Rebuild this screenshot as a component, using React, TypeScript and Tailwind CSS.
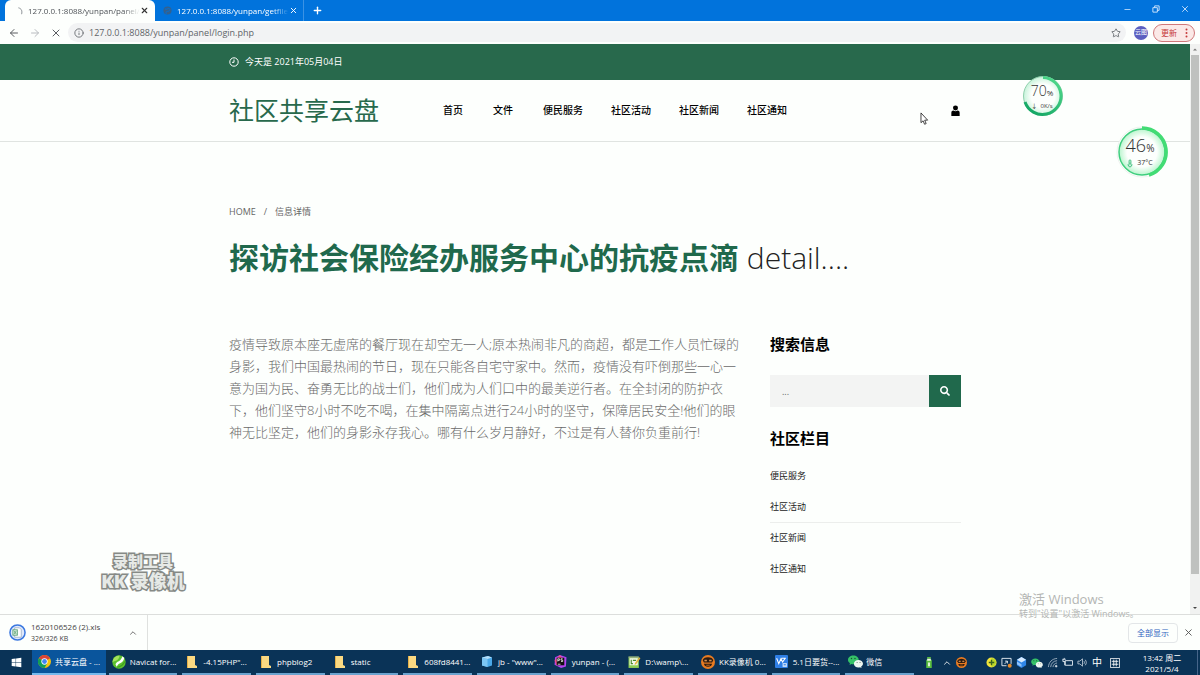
import type { ReactNode } from "react";
import { ArrowLeft, ArrowRight, ChevronUp, Info, Minus, Plus, Star, X } from "lucide-react";
import { FaSearch, FaWindows } from "react-icons/fa";

const navLinks = ["首页", "文件", "便民服务", "社区活动", "社区新闻", "社区通知"];
const categories = ["便民服务", "社区活动", "社区新闻", "社区通知"];

const article =
  "疫情导致原本座无虚席的餐厅现在却空无一人;原本热闹非凡的商超，都是工作人员忙碌的身影，我们中国最热闹的节日，现在只能各自宅守家中。然而，疫情没有吓倒那些一心一意为国为民、奋勇无比的战士们，他们成为人们口中的最美逆行者。在全封闭的防护衣下，他们坚守8小时不吃不喝，在集中隔离点进行24小时的坚守，保障居民安全!他们的眼神无比坚定，他们的身影永存我心。哪有什么岁月静好，不过是有人替你负重前行!";

function ChromeIcon() {
  return (
    <svg viewBox="0 0 24 24" className="h-[13px] w-[13px]">
      <circle cx="12" cy="12" r="12" fill="#f4c20d" />
      <path d="M12 12 1.6 6A12 12 0 0 1 22.4 6Z" fill="#db4437" />
      <path d="M12 12 1.6 6A12 12 0 0 0 12 24l5-9Z" fill="#0f9d58" />
      <circle cx="12" cy="12" r="5.8" fill="#fff" />
      <circle cx="12" cy="12" r="4.4" fill="#4285f4" />
    </svg>
  );
}

function NavicatIcon() {
  return (
    <svg viewBox="0 0 24 24" className="h-[14px] w-[14px]">
      <circle cx="12" cy="12" r="11.500" fill="#5cc02e" />
      <path d="M1 13C1 6 6 1 13 1c0 4-3 8-6 9s-5 1-6 3Z" fill="#a5e25c" />
      <path d="M6 16c2-5 5-4 8-7 2-2 3-5 4-7l3 3c-1 5-4 8-7 9s-4 3-6 6Z" fill="#fff" />
      <path d="M9 21c6-1 10-4 13-10" fill="none" stroke="#3f9f1e" strokeWidth="2" />
    </svg>
  );
}

function FolderIcon() {
  return (
    <svg viewBox="0 0 10 14" className="h-[14px] w-[10px]">
      <path d="M0 1h6v12H0z" fill="#e5b04a" />
      <path d="M1 1h7v9l2 1v2H1z" fill="#fbd982" />
    </svg>
  );
}

function CubeIcon() {
  return (
    <svg viewBox="0 0 24 24" className="h-[13px] w-[12px]">
      <path d="M2 4 14 1l8 3v16l-9 3-11-3Z" fill="#4aa8e8" />
      <path d="m2 4 11 3v16L2 20Z" fill="#7cc6f4" />
      <path d="m2 4 12-3 8 3-9 3Z" fill="#b4dffa" />
    </svg>
  );
}

function PhpStormIcon() {
  return (
    <svg viewBox="0 0 24 24" className="h-[13px] w-[13px]">
      <path d="M2 4 11 0l12 4-1 17-9 3L1 18Z" fill="#b345f1" />
      <path d="M1 10 11 0l4 5L5 20Z" fill="#f14f8c" />
      <rect x="5" y="5" width="14" height="14" fill="#111" />
      <path d="M7 12V7h3v3H7m9-3h-3v2.500h3V12h-3M7 17h5" fill="none" stroke="#fff" strokeWidth="1.400" />
    </svg>
  );
}

function NotepadIcon() {
  return (
    <svg viewBox="0 0 24 24" className="h-[14px] w-[13px]">
      <path d="M1 2h19v21H1z" fill="#8fce54" />
      <path d="M3 5h15v13H3z" fill="#f2f8ea" />
      <path d="M1 2h19v2H1z" fill="#9aa393" />
      <path d="M6 8v7h3M9 9h6" fill="none" stroke="#4a8a28" strokeWidth="2" />
      <path d="m13 14 8-11 2 2-8 11-3 1Z" fill="#e3b13b" />
    </svg>
  );
}

function KkIcon({ className }: { className: string }) {
  return (
    <svg viewBox="0 0 24 24" className={className}>
      <circle cx="12" cy="12" r="12" fill="#e77b22" />
      <path d="M3 9c1-3 4-5 9-5s8 2 9 5l-2 4H5Z" fill="#2b1a10" />
      <path d="M6 9h4M14 10h4M6 10h4M14 9h4" stroke="#f3a45c" strokeWidth="1.500" />
      <path d="M5 15h14c-1 4-3 5-7 5s-6-1-7-5Z" fill="#2b1a10" />
      <path d="M9 17.500h6" stroke="#e77b22" strokeWidth="1.400" />
    </svg>
  );
}

function WpsIcon() {
  return (
    <svg viewBox="0 0 24 24" className="h-[13px] w-[13px]">
      <rect width="24" height="24" rx="2" fill="#2f7fe6" />
      <path d="m3 6 4 10 4-9 3 6 5-7M12 6h8" fill="none" stroke="#fff" strokeWidth="2" />
      <path d="M14 15h8v7h-8z" fill="#cfe3fb" />
      <path d="M16 17h4v2h-4z" fill="#2f7fe6" />
    </svg>
  );
}

function WechatIcon({ className }: { className: string }) {
  return (
    <svg viewBox="0 0 28 24" className={className}>
      <path d="M10 1C4.500 1 0 4.600 0 9c0 2.500 1.400 4.600 3.600 6L3 18.500l3.500-2c1 .3 2.200.5 3.500.5 5.500 0 10-3.600 10-8S15.500 1 10 1Z" fill="#35c268" />
      <path d="M19.500 9C15 9 11 12 11 16s4 7 8.500 7c1 0 2-.1 2.900-.4l2.800 1.400-.6-2.700c2-1.200 3.400-3.200 3.400-5.300 0-4-4-7-8.500-7Z" fill="#eef7f0" />
      <circle cx="6.500" cy="6.500" r="1.300" fill="#17502f" />
      <circle cx="13" cy="6.500" r="1.300" fill="#17502f" />
      <circle cx="17" cy="14" r="1" fill="#5b6b60" />
      <circle cx="22.500" cy="14" r="1" fill="#5b6b60" />
    </svg>
  );
}

const tasks: { label: string; icon: ReactNode; active?: boolean }[] = [
  { label: "共享云盘 - ...", icon: <ChromeIcon />, active: true },
  { label: "Navicat for...", icon: <NavicatIcon /> },
  { label: "-4.15PHP\"...", icon: <FolderIcon /> },
  { label: "phpblog2", icon: <FolderIcon /> },
  { label: "static", icon: <FolderIcon /> },
  { label: "608fd8441...", icon: <FolderIcon /> },
  { label: "jb - \"www\"...", icon: <CubeIcon /> },
  { label: "yunpan - (...", icon: <PhpStormIcon /> },
  { label: "D:\\wamp\\...", icon: <NotepadIcon /> },
  { label: "KK录像机 0...", icon: <KkIcon className="h-[14px] w-[14px]" /> },
  { label: "5.1日要货--...", icon: <WpsIcon /> },
  { label: "微信", icon: <WechatIcon className="h-[13px] w-[15px]" /> },
];

function TabStrip() {
  return (
    <div className="flex h-[21px] items-stretch bg-[#0173dc] pl-[5px] text-[8px]">
      <div className="flex w-[150px] items-center rounded-t-md bg-[#fdfffd] pl-[11px] pr-[6px] text-[#4f5358]">
        <svg viewBox="0 0 10 10" className="mr-1 h-2 w-2 shrink-0">
          <path d="M3 1c4 1 5 4 4 8" fill="none" stroke="#8a8f94" strokeWidth="1.200" />
        </svg>
        <span className="flex-1 whitespace-nowrap [mask-image:linear-gradient(to_right,black_85%,transparent)]">
          127.0.0.1:8088/yunpan/panel/
        </span>
        <button type="button" aria-label="关闭标签页" className="text-[#333]">
          <X className="h-[9px] w-[9px]" strokeWidth={3} />
        </button>
      </div>
      <div className="flex w-[149px] items-center border-r border-[#3b92e4] pl-2 pr-[5px] text-white">
        <svg viewBox="0 0 10 10" className="mr-[5px] h-[9px] w-[9px] shrink-0">
          <circle cx="5" cy="5" r="4.500" fill="#34618f" />
          <path d="M2 3c2 2 3-1 5 0s0 3-2 3-2 2-1 3" fill="none" stroke="#0173dc" />
        </svg>
        <span className="flex-1 whitespace-nowrap [mask-image:linear-gradient(to_right,black_85%,transparent)]">
          127.0.0.1:8088/yunpan/getfile
        </span>
        <button type="button" aria-label="关闭标签页">
          <X className="h-[9px] w-[9px]" strokeWidth={2.5} />
        </button>
      </div>
      <button type="button" aria-label="新标签页" className="ml-2 text-white">
        <Plus className="h-[11px] w-[11px]" strokeWidth={3} />
      </button>
      <div className="ml-auto flex items-center gap-5 pb-[3px] pr-[10px] text-[#dcecff]">
        <button type="button" aria-label="最小化">
          <Minus className="h-[9px] w-[9px]" />
        </button>
        <button type="button" aria-label="还原">
          <svg viewBox="0 0 9 9" className="h-2 w-2" fill="none" stroke="currentColor">
            <path d="M1 3h5v5H1zM3 3V1h5v5H6" />
          </svg>
        </button>
        <button type="button" aria-label="关闭">
          <X className="h-[10px] w-[10px]" />
        </button>
      </div>
    </div>
  );
}

function Toolbar() {
  return (
    <div className="flex h-[23px] items-center bg-[#fdfffd] pl-2 pr-[5px]">
      <div className="flex items-center gap-[9px] text-[#5a5d61]">
        <button type="button" aria-label="后退">
          <ArrowLeft className="h-[12px] w-[12px]" strokeWidth={2} />
        </button>
        <button type="button" aria-label="前进" className="text-[#b9bcc0]">
          <ArrowRight className="h-[12px] w-[12px]" strokeWidth={2} />
        </button>
        <button type="button" aria-label="停止加载">
          <X className="h-[12px] w-[12px]" strokeWidth={2} />
        </button>
      </div>
      <div className="ml-[6px] flex h-[19px] flex-1 items-center rounded-full bg-[#f2f3f4] pl-[6px] pr-[5px]">
        <Info className="h-[10px] w-[10px] text-[#5f6368]" strokeWidth={2} />
        <input
          aria-label="地址栏"
          defaultValue="127.0.0.1:8088/yunpan/panel/login.php"
          className="ml-[5px] min-w-0 flex-1 bg-transparent text-[9px] text-[#606468] outline-none"
        />
        <button type="button" aria-label="收藏">
          <Star className="h-[10px] w-[10px] text-[#5f6368]" strokeWidth={2} />
        </button>
      </div>
      <span className="ml-2 flex h-[14px] w-[14px] items-center justify-center whitespace-nowrap rounded-full bg-[#5c5fc0] text-[6px] text-white">
        云图
      </span>
      <button
        type="button"
        className="ml-[5px] flex h-[18px] w-[42px] items-center justify-between rounded-full border border-[#d0787a] bg-[#fbe9e7] pl-[7px] pr-[6px] text-[8px] text-[#c5393a]"
      >
        更新
        <svg viewBox="0 0 3 10" className="h-[10px] w-[3px]" fill="currentColor">
          <circle cx="1.500" cy="1.500" r="1" />
          <circle cx="1.500" cy="5" r="1" />
          <circle cx="1.500" cy="8.500" r="1" />
        </svg>
      </button>
    </div>
  );
}

function SiteHeader() {
  return (
    <header>
      <div className="bg-[#28694c]">
        <div className="mx-auto flex h-9 max-w-[732px] items-center gap-[6px] text-[9px] text-white">
          <svg viewBox="0 0 10 10" className="h-[10px] w-[10px]" fill="none" stroke="currentColor">
            <circle cx="5" cy="5" r="4.200" />
            <path d="M5 2.500V5.300H3" />
          </svg>
          今天是 2021年05月04日
        </div>
      </div>
      <div className="border-b border-[#e0e4e1]">
        <div className="mx-auto flex h-[61px] max-w-[732px] items-center">
          <a href="#" className="text-[25px] font-normal text-[#28694c]">
            社区共享云盘
          </a>
          <nav className="ml-16 flex gap-7 text-[10px] font-medium text-black">
            {navLinks.map((link) => (
              <a key={link} href="#" className={link.length === 2 ? "mr-[2px]" : ""}>
                {link}
              </a>
            ))}
          </nav>
          <a href="#" aria-label="用户中心" className="ml-auto">
            <svg viewBox="0 0 11 13" className="h-[12px] w-[11px]">
              <circle cx="5.500" cy="3.200" r="2.700" />
              <path d="M1 12V8.500C1 6.800 2 6 3.300 6c1.300 1 3.100 1 4.400 0C9 6 10 6.800 10 8.500V12Z" />
            </svg>
          </a>
        </div>
      </div>
    </header>
  );
}

function Sidebar() {
  return (
    <aside>
      <h2 className="text-[15px] font-bold leading-[22px] text-black">搜索信息</h2>
      <form className="mt-5 flex items-center" onSubmit={(e) => e.preventDefault()}>
        <input
          aria-label="搜索信息"
          placeholder="..."
          className="h-8 min-w-0 flex-1 bg-[#f3f4f3] pl-3 text-[9px] text-[#333] outline-none placeholder:text-[#666]"
        />
        <button
          type="submit"
          aria-label="搜索"
          className="flex h-8 w-8 items-center justify-center bg-[#20694c] text-white"
        >
          <FaSearch className="h-[10px] w-[10px]" />
        </button>
      </form>
      <h2 className="mt-5 text-[15px] font-bold leading-[22px] text-black">社区栏目</h2>
      <ul className="mt-3 text-[9px] text-[#222]">
        {categories.map((name) => (
          <li
            key={name}
            className="flex h-[31px] items-center border-b border-transparent [&:nth-child(2)]:border-[#eceeec]"
          >
            <a href="#">{name}</a>
          </li>
        ))}
      </ul>
    </aside>
  );
}

function Scrollbar() {
  return (
    <div className="flex w-[10px] flex-col items-center bg-[#f1f2f1]">
      <svg viewBox="0 0 10 10" className="h-[11px] w-[10px]">
        <path d="m3 6 2-2 2 2Z" fill="#777" />
      </svg>
      <div className="w-2 flex-1 bg-[#bfc1bf]" />
      <svg viewBox="0 0 10 40" className="h-10 w-[10px]">
        <path d="m3 33 2 2 2-2Z" fill="#444" />
      </svg>
    </div>
  );
}

function NetworkBall() {
  return (
    <div className="absolute left-[1022px] top-[75px] h-[42px] w-[42px] text-[#333]">
      <svg viewBox="0 0 42 42" className="absolute inset-0">
        <defs>
          <radialGradient id="netFill">
            <stop offset="0.6" stopColor="#fdfffd" />
            <stop offset="1" stopColor="#c6f3da" />
          </radialGradient>
          <linearGradient id="netRing" x1="1" y1="0" x2="0.3" y2="1">
            <stop offset="0" stopColor="#55dc8e" />
            <stop offset="1" stopColor="#16a866" />
          </linearGradient>
        </defs>
        <circle cx="21" cy="21" r="19.500" fill="url(#netFill)" stroke="#8fcfac" />
        <path d="M21 2.500A18.500 18.500 0 1 1 3 27" fill="none" stroke="url(#netRing)" strokeWidth="3" />
      </svg>
      <div className="relative flex h-full flex-col items-center pr-[2px] pt-2 leading-none">
        <span className="text-[14px] font-light leading-4">
          70<span className="text-[8px] font-normal">%</span>
        </span>
        <span className="text-[6px] leading-[10px]">↓ &nbsp;0K/s</span>
      </div>
    </div>
  );
}

function TemperatureBall() {
  return (
    <div className="absolute left-[1116px] top-[126px] h-[52px] w-[52px] text-[#333]">
      <svg viewBox="0 0 52 52" className="absolute inset-0">
        <defs>
          <radialGradient id="tempFill">
            <stop offset="0.65" stopColor="#fdfffd" />
            <stop offset="1" stopColor="#b9f5cd" />
          </radialGradient>
        </defs>
        <circle cx="26" cy="26" r="25" fill="#fdfffd" stroke="#edf3ee" />
        <circle cx="26" cy="26" r="23" fill="url(#tempFill)" stroke="#3fce7e" strokeWidth="1.500" />
        <path d="M26 2a24 24 0 0 1 7 47" fill="none" stroke="#42dc74" strokeWidth="3.500" />
      </svg>
      <div className="relative flex h-full flex-col items-center pr-1 pt-[9px] leading-none">
        <span className="text-[18px] font-light leading-5">
          46<span className="text-[10px] font-normal">%</span>
        </span>
        <span className="flex items-center gap-1 text-[7px] leading-[10px]">
          <svg viewBox="0 0 6 10" className="h-[9px] w-[6px]" fill="none" stroke="#2fb872">
            <path d="M2 5V2a1 1 0 0 1 2 0v3a2 2 0 1 1-2 0Z" />
            <path d="M3 4v3" />
          </svg>
          37°C
        </span>
      </div>
    </div>
  );
}

function DownloadBar() {
  return (
    <div className="flex h-9 items-center border-t border-[#dcdedc] bg-[#fdfffd]">
      <div className="flex h-full w-[148px] items-center border-r border-[#dfe1df] pl-[9px] pr-[9px]">
        <svg viewBox="0 0 18 18" className="h-[17px] w-[17px] shrink-0">
          <circle cx="9" cy="9" r="8" fill="#dfe9fb" stroke="#3b78e0" strokeWidth="1.600" />
          <path d="M6 4h5l2 2v8H6z" fill="#fff" stroke="#8aa0b8" strokeWidth="0.700" />
          <path d="M4 6h5v6H4z" fill="#cfe6d5" stroke="#4d9a68" strokeWidth="0.700" />
          <path d="m5 7 3 4m0-4-3 4" stroke="#4d9a68" strokeWidth="0.700" />
        </svg>
        <div className="ml-[5px] flex-1 text-[#444]">
          <div className="text-[8px] leading-3">1620106526 (2).xls</div>
          <div className="text-[7px] leading-3">326/326 KB</div>
        </div>
        <button type="button" aria-label="下载选项" className="text-[#555]">
          <ChevronUp className="h-[10px] w-[10px]" />
        </button>
      </div>
      <button
        type="button"
        className="ml-auto h-5 w-[50px] rounded-sm border border-[#e3e6e8] text-[8px] text-[#2f63c0]"
      >
        全部显示
      </button>
      <button type="button" aria-label="关闭下载栏" className="ml-[5px] mr-[6px] text-[#555]">
        <X className="h-[11px] w-[11px]" />
      </button>
    </div>
  );
}

function Tray() {
  return (
    <div className="ml-auto flex items-center text-white">
      <svg viewBox="0 0 8 12" className="mr-[9px] h-[11px] w-2">
        <path d="M2 0h4v2H2zM1 3h6v9H1z" fill="#5bbf3f" />
        <path d="M2 2h4v2H2zM3 6h2v4H3z" fill="#e9f8e0" />
      </svg>
      <ChevronUp className="mr-1 h-[10px] w-[10px]" />
      <KkIcon className="mr-[19px] h-[11px] w-[11px]" />
      <div className="flex items-center gap-1">
        <svg viewBox="0 0 12 12" className="h-[11px] w-[11px]">
          <circle cx="6" cy="6" r="5.500" fill="#f3e53a" />
          <path d="M6 1v10A5 5 0 0 0 6 1Z" fill="#b9d62b" />
          <path d="M6 3v6M3 6h6" stroke="#37641e" strokeWidth="1.600" />
        </svg>
        <svg viewBox="0 0 12 12" className="h-[11px] w-[11px]" fill="none" stroke="#e6edf4">
          <path d="M1 1.500h10v6M1 1.500v8h5M4 7.500 7 4.500M4.500 4.500H7V7" />
          <circle cx="9.500" cy="9.500" r="2.200" fill="#e98b2a" stroke="none" />
        </svg>
        <svg viewBox="0 0 12 12" className="h-[11px] w-[11px]">
          <path d="m1 3 5-3 5 3v6l-5 3-5-3Z" fill="#2f86e8" />
          <path d="m1 3 5-3 5 3-5 3Z" fill="#d5eaff" />
          <path d="m1 5 5 3v3L1 8Z" fill="#8fc3fa" />
        </svg>
        <WechatIcon className="h-[10px] w-[12px]" />
        <svg viewBox="0 0 12 12" className="h-[11px] w-[11px]" fill="none" stroke="#aebdcc" strokeWidth="0.900">
          <path d="M1.500 11C2 5.500 5.500 2 11 1.500M4 11c.3-4 3-6.700 7-7M6.500 11c.3-2.500 2-4.200 4.500-4.500" />
          <circle cx="10" cy="10" r="1" fill="#fff" />
        </svg>
        <svg viewBox="0 0 12 12" className="h-[11px] w-[11px]" fill="none" stroke="#e6edf4">
          <path d="M3.500 4h8v5h-8zM1 2v3h2.500M2.500 1v1M1 2.500h3M3 5v4" />
        </svg>
        <svg viewBox="0 0 12 12" className="h-[11px] w-[11px]" fill="none" stroke="#c3d0dc" strokeWidth="0.900">
          <path d="M1 4.500h2l3-2.500v8L3 7.500H1ZM7.500 4.500c.8 1 .8 2 0 3M9 3c1.500 2 1.500 4 0 6" />
        </svg>
        <span className="text-[10px]">中</span>
      </div>
      <svg viewBox="0 0 12 12" className="ml-2 h-[10px] w-[10px]" fill="none" stroke="#fff">
        <path d="M.5.5h11v11H.5zM2 4h8M2 7.500h8M4.500 2v8M7.500 2v8" />
      </svg>
      <div className="ml-5 mr-[13px] w-[44px] text-center text-[8px] leading-[11px]">
        <div>13:42 周二</div>
        <div>2021/5/4</div>
      </div>
      <div className="mr-[2px] h-[25px] w-px bg-[#46658a]" />
    </div>
  );
}

function Taskbar() {
  return (
    <div className="flex h-[25px] items-stretch bg-[#0a3357] text-[8px] text-white">
      <button type="button" aria-label="开始" className="flex w-8 shrink-0 items-center justify-center">
        <FaWindows className="h-[11px] w-[11px]" />
      </button>
      <div className="grid max-w-[884px] flex-1 grid-cols-12">
        {tasks.map((task) => (
          <button
            key={task.label}
            type="button"
            className={
              task.active
                ? "flex min-w-0 items-center gap-[3px] border-b-2 border-[#76b9ed] bg-[#0a559c] pl-1"
                : "ml-[3px] mr-[2px] flex min-w-0 items-center gap-[3px] border-b-2 border-[#6ba3cf] pl-[2px]"
            }
          >
            <span className="flex w-4 shrink-0 justify-center">{task.icon}</span>
            <span className="whitespace-nowrap">{task.label}</span>
          </button>
        ))}
      </div>
      <Tray />
    </div>
  );
}

export default function App() {
  return (
    <div className="relative flex min-h-screen flex-col bg-[#fdfffd] font-['Open_Sans','Noto_Sans_CJK_SC',sans-serif]">
      <TabStrip />
      <Toolbar />
      <div className="flex flex-1">
        <div className="min-w-0 flex-1">
          <SiteHeader />
          <main className="mx-auto max-w-[732px] pt-[62px]">
            <div className="flex items-center gap-2 text-[9px] leading-4 text-[#666]">
              <a href="#">HOME</a>
              <span>/</span>
              <span>信息详情</span>
            </div>
            <h1 className="mt-[18px] whitespace-nowrap text-[30px] font-light leading-10 text-[#222]">
              <strong className="font-bold text-[#20694c]">探访社会保险经办服务中心的抗疫点滴</strong> detail....
            </h1>
            <div className="mt-[55px] grid grid-cols-[1fr_191px] gap-7">
              <p className="text-[13px] font-light leading-[22px] text-[#6a6a6a]">{article}</p>
              <Sidebar />
            </div>
          </main>
        </div>
        <Scrollbar />
      </div>
      <DownloadBar />
      <Taskbar />

      <NetworkBall />
      <TemperatureBall />

      {/* 录屏软件水印 */}
      <div className="pointer-events-none absolute bottom-[84px] left-[100px] w-[86px] text-center font-black text-[#e6e9e6] [-webkit-text-stroke:3px_#868a86] [paint-order:stroke_fill]">
        <div className="text-[15px] leading-5">录制工具</div>
        <div className="whitespace-nowrap text-[18px] leading-5">KK 录像机</div>
      </div>

      {/* 系统激活提示 */}
      <div className="pointer-events-none absolute bottom-[55px] left-[1019px] whitespace-nowrap text-[#b4b6b4]">
        <div className="text-[13px] leading-[18px]">激活 Windows</div>
        <div className="text-[9px] leading-3">转到"设置"以激活 Windows。</div>
      </div>

      <svg viewBox="0 0 9 14" className="pointer-events-none absolute left-[920px] top-[112px] h-[13px] w-[9px]">
        <path d="M.7 1v10.500l2.300-2 1.600 3.700 1.700-.7-1.600-3.700h3.200Z" fill="#fff" stroke="#222" strokeWidth="0.900" />
      </svg>
    </div>
  );
}
